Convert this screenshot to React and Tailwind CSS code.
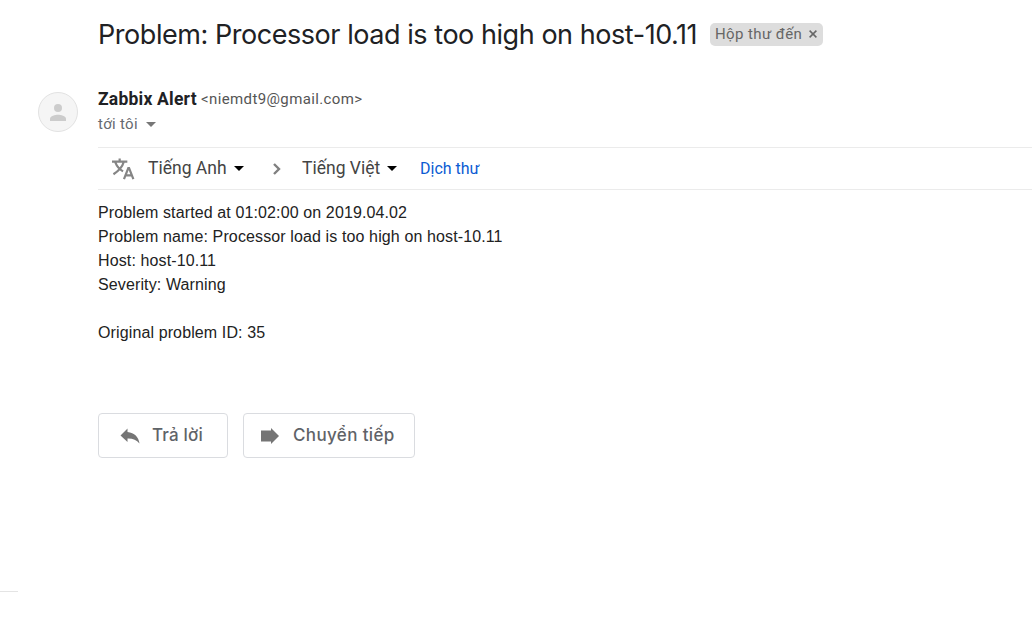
import React from "react";

function Caret({ className, viewBox = "0 0 10 5" }) {
  return (
    <svg viewBox={viewBox} className={className} fill="currentColor" aria-hidden="true">
      <path d="M0 0h10L5 5z" />
    </svg>
  );
}

function Avatar() {
  return (
    <div className="mt-[5px] flex size-10 shrink-0 items-center justify-center rounded-full border border-[#e2e2e2] bg-[#f5f5f5]">
      <svg viewBox="0 0 16 17" className="h-[17px] w-4 text-[#cccccc]" fill="currentColor" aria-hidden="true">
        <circle cx="8" cy="4" r="4" />
        <path d="M0 17v-2.2C0 12.100 5.300 10.800 8 10.800s8 1.300 8 4V17z" />
      </svg>
    </div>
  );
}

function Subject() {
  return (
    <header className="flex h-[69px] items-center pl-[98px]">
      <h1 className="w-[612px] shrink-0 whitespace-nowrap font-['Inter',sans-serif] text-[27px] leading-9 tracking-[-0.45px] text-[#202124]">
        Problem: Processor load is too high on host-10.11
      </h1>
      <div className="flex h-[23px] w-[113px] shrink-0 items-center justify-between rounded-[5px] bg-[#dddddd] pl-[5px] pr-[6px] text-[#666666]">
        <span className="-mt-0.5 whitespace-nowrap text-[15px] leading-5 tracking-[0.4px]">Hộp thư đến</span>
        <svg viewBox="0 0 8 8" className="-mt-px size-2" fill="none" stroke="currentColor" strokeWidth="1.5" aria-hidden="true">
          <path d="M.6.6l6.800 6.800M7.400.6L.6 7.400" />
        </svg>
      </div>
    </header>
  );
}

function Sender() {
  return (
    <div className="flex h-[60px] gap-5 pl-[38px]">
      <Avatar />
      <div>
        <div className="flex h-6 items-center gap-1 whitespace-nowrap">
          <span className="w-[99px] text-[17.500px] font-bold tracking-[0.22px] text-[#202124]">Zabbix Alert</span>
          <span className="text-[15px] tracking-[0.38px] text-[#555555]">&lt;niemdt9@gmail.com&gt;</span>
        </div>
        <div className="flex h-[26px] items-center gap-[8px] text-[15px] tracking-[0.3px] text-[#666a70]">
          <span>tới tôi</span>
          <Caret className="h-[5px] w-[10px] text-[#777777]" />
        </div>
      </div>
    </div>
  );
}

function TranslateBar() {
  return (
    <div className="ml-[98px] flex h-[43px] items-center border-y border-[#ebebeb] pl-[14px] text-[17.500px] text-[#444444]">
      <svg viewBox="0 0 24 24" className="h-6 w-[23px] shrink-0 text-[#858585]" fill="none" stroke="currentColor" strokeWidth="2.300" aria-hidden="true">
        <path d="M0 4.200h16M8 1v3M3.500 5C5 9 7.500 12 11.500 14.500M12.300 4.500C11 9.500 7 14 1.500 17.500" />
        <path d="M12.500 22.500L17 11h.8l4.500 11.500M14 18.700h6.500" />
      </svg>
      <span className="ml-[13px] w-[79px] whitespace-nowrap">Tiếng Anh</span>
      <Caret className="ml-[7px] h-[5px] w-[10px] text-black" />
      <svg viewBox="0 0 8 12" className="ml-[29px] h-3 w-2" fill="none" stroke="#808080" strokeWidth="2.400" aria-hidden="true">
        <path d="M1 1l5 5-5 5" />
      </svg>
      <span className="ml-[21px] w-[78px] whitespace-nowrap">Tiếng Việt</span>
      <Caret className="ml-[7px] h-[5px] w-[10px] text-black" />
      <a className="ml-[23px] whitespace-nowrap text-[16px] text-[#0b5bd3]">Dịch thư</a>
    </div>
  );
}

function Message() {
  return (
    <div className="h-[223px] pl-[98px] pt-[11px] font-['Liberation_Sans',sans-serif] text-base leading-6 tracking-[0.12px] text-[#222222]">
      <p>Problem started at 01:02:00 on 2019.04.02</p>
      <p>Problem name: Processor load is too high on host-10.11</p>
      <p>Host: host-10.11</p>
      <p>Severity: Warning</p>
      <p className="mt-6">Original problem ID: 35</p>
    </div>
  );
}

function Actions() {
  return (
    <div className="flex gap-[15px] pl-[98px] font-['Inter',sans-serif] text-[17px] font-medium text-[#5f6368]">
      <button className="flex h-[45px] w-[130px] items-center rounded-[4px] border border-[#dadce0] pl-[21px]">
        <svg viewBox="0 0 20 16" className="h-4 w-5 shrink-0 text-[#757575]" fill="currentColor" aria-hidden="true">
          <path d="M7.500 4V.5L.5 7.500l7 6.500v-3.500c5-.2 9 1.200 12 5C18.500 9 14.500 4.800 7.500 4z" />
        </svg>
        <span className="ml-3 whitespace-nowrap tracking-[0.2px]">Trả lời</span>
      </button>
      <button className="flex h-[45px] w-[172px] items-center rounded-[4px] border border-[#dadce0] pl-[17px]">
        <svg viewBox="0 0 18 16" className="h-4 w-[18px] shrink-0 text-[#757575]" fill="currentColor" aria-hidden="true">
          <path d="M0 2.500h10V0l8 8-8 8v-2.500H0z" />
        </svg>
        <span className="ml-[14px] whitespace-nowrap tracking-[0.36px]">Chuyển tiếp</span>
      </button>
    </div>
  );
}

export default function App() {
  return (
    <main className="flex h-[618px] w-[1032px] flex-col overflow-hidden bg-white font-['Roboto',sans-serif]">
      <Subject />
      <div className="h-[18px] shrink-0" />
      <Sender />
      <TranslateBar />
      <Message />
      <Actions />
      <div className="mt-[133px] h-px w-[18px] bg-[#e4e4e4]" />
    </main>
  );
}
